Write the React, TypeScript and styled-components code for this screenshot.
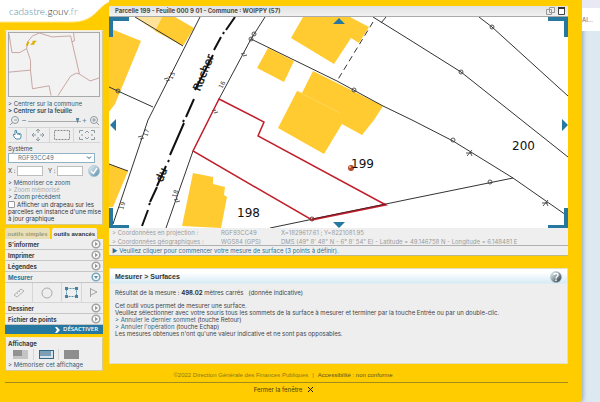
import React from "react";
import styled, { createGlobalStyle, css } from "styled-components";

const yellow = "#ffcc00";
const building = "#ffcb30";
const blue = "#2778a0";
const ink = "#3f4347";

const GlobalStyle = createGlobalStyle`
  *, *::before, *::after { box-sizing: border-box; }
  body {
    margin: 0;
    background: #dde9f1;
    font-family: Inter, "Liberation Sans", Arial, sans-serif;
    font-size: 6px;
    line-height: 7px;
    color: ${ink};
  }
  button, input, select { font: inherit; color: inherit; margin: 0; padding: 0; }
  button { border: 0; background: none; }
  a { color: inherit; text-decoration: none; }
  svg { display: block; }
  h1, h2, p { margin: 0; }
`;

const Screen = styled.div`
  display: flex;
  min-height: 100vh;
`;
const Site = styled.div`
  flex: 1;
  min-width: 0;
  display: flex;
  flex-direction: column;
  background: ${yellow};
  border-radius: 0 0 4px 0;
  box-shadow: 1px 0 4px #8fa3b0;
`;
const Outside = styled.aside`
  width: 18px;
  padding-top: 8px;
  background: linear-gradient(#e9e9f3 8px, transparent 8px);
`;
const OutsideTab = styled.div`
  height: 23px;
  background: #fff;
  color: #666;
  font-size: 6px;
  line-height: 24px;
`;
const Columns = styled.div`
  display: grid;
  grid-template-columns: 109px minmax(0, 1fr);
  padding-right: 14px;
`;
const Sidebar = styled.div`
  display: flex;
  flex-direction: column;
`;
const Brand = styled.header`
  display: grid;
  height: 30px;
  & > * { grid-area: 1 / 1; }
`;
const Logo = styled.a`
  z-index: 1;
  padding: 4px 0 0 9px;
  font: 300 10px/14px Lato, sans-serif;
  color: #4c8aa2;
  b { font-weight: 300; color: #30383d; }
  i { font-style: normal; color: #7fa5b5; }
`;
const Panel = styled.section`
  margin: 0 6px 0 5px;
  padding: 2px 3px;
  background: #eeeeee;
  border: 1px solid #d8c98c;
  border-top-color: #f8efc9;
`;
const MapPanel = styled(Panel)`
  padding: 1px 2px 1px;
  height: 195px;
`;
const MiniMap = styled.div`
  border: 1px solid #a9a9a9;
  background: #f2f2f2;
  margin-bottom: 3px;
`;
const TextLink = styled.a<{ $strong?: boolean; $muted?: boolean }>`
  display: block;
  line-height: 7px;
  font-weight: ${(p) => (p.$strong ? 600 : 400)};
  color: ${(p) => (p.$muted ? "#aaa" : p.$strong ? "#2b4d60" : "#32586d")};
  white-space: nowrap;
`;
const ToolStrip = styled.div<{ $cols: string; $h: number }>`
  display: grid;
  grid-template-columns: ${(p) => p.$cols};
  height: ${(p) => p.$h}px;
  border-bottom: 1px solid #d6d6d6;
`;
const ToolButton = styled.button`
  display: grid;
  place-items: center;
  min-width: 0;
  & + & { border-left: 1px solid #d6d6d6; }
`;
const ZoomRow = styled(ToolStrip)`
  align-items: center;
  margin-top: 1px;
`;
const ZoomSlider = styled.input`
  appearance: none;
  width: 100%;
  min-width: 0;
  height: 8px;
  background: linear-gradient(#aaa, #aaa) 0 4px / 100% 1px no-repeat;
  &::-webkit-slider-thumb {
    appearance: none;
    width: 4px;
    height: 6px;
    background: #5587a0;
    clip-path: polygon(0 0, 100% 0, 50% 100%);
  }
`;
const Sign = styled.span`
  text-align: center;
  color: #5d8aa0;
  font-size: 8px;
`;
const FieldLabel = styled.label`
  display: block;
  padding-top: 1px;
  line-height: 9px;
`;
const SystemSelect = styled.select`
  display: block;
  width: calc(100% - 5px);
  height: 10px;
  padding-left: 9px;
  border: 1px solid #8fb3c4;
  border-radius: 0;
  background: #fff;
  color: #4d7485;
  line-height: 8px;
  appearance: none;
`;
const SelectBox = styled.div`
  display: grid;
  & > * { grid-area: 1 / 1; }
  svg { justify-self: end; align-self: center; margin-right: 8px; pointer-events: none; }
`;
const Coords = styled.form`
  display: flex;
  align-items: center;
  gap: 3px;
  height: 16px;
  label { width: 6px; white-space: nowrap; }
  label + input { flex: 1; }
  input + label { margin-left: 2px; }
  button { width: 12px; height: 12px; margin-left: 2px; }
`;
const CoordInput = styled.input`
  min-width: 0;
  width: 24px;
  height: 10px;
  border: 1px solid #bdbdbd;
  background: #fff;
`;
const ZoomLinks = styled.nav`
  padding-top: 0;
`;
const FlagOption = styled.label`
  display: block;
  line-height: 7px;
  margin-top: 1px;
  white-space: nowrap;
  color: #333;
  input {
    appearance: none;
    width: 7px;
    height: 7px;
    margin-right: 2px;
    border: 1px solid #999;
    border-radius: 1px;
    background: #fff;
    vertical-align: -1px;
  }
`;
const Tabs = styled.div`
  display: flex;
  gap: 2px;
  margin: 3px 6px 0 5px;
`;
const Tab = styled.button<{ $active?: boolean }>`
  width: 45px;
  height: 11px;
  border-radius: 2px 2px 0 0;
  background: ${(p) => (p.$active ? "#eeeeee" : "#e8dfb7")};
  color: ${(p) => (p.$active ? "#333" : "#9c9779")};
  font-family: "Liberation Sans", Arial, sans-serif;
  font-weight: 700;
  white-space: nowrap;
  line-height: 10px;
`;
const Menu = styled.nav`
  margin: 0 6px 0 5px;
  background: #eeeeee;
`;
const MenuRow = styled.button<{ $open?: boolean }>`
  display: flex;
  align-items: center;
  justify-content: space-between;
  width: 100%;
  height: 11px;
  padding: 0 2px 0 3px;
  border-bottom: 1px solid #c5c5c5;
  font-weight: 700;
  color: ${(p) => (p.$open ? blue : "#3c3c3c")};
`;
const Disable = styled.button`
  display: flex;
  align-items: center;
  justify-content: flex-end;
  gap: 3px;
  width: 100%;
  height: 9px;
  padding-right: 5px;
  background: ${blue};
  color: #fff;
  font: 600 6px/9px "Open Sans", sans-serif;
`;
const DisplayPanel = styled(Panel)`
  margin-top: 3px;
  padding: 0 2px;
  height: 34px;
  h2 { font-size: 6px; line-height: 11px; color: #3c3c3c; }
`;
const LayoutChoices = styled.div`
  display: grid;
  grid-template-columns: repeat(3, 25px);
  height: 11px;
  margin-bottom: 1px;
`;
const Main = styled.main`
  display: flex;
  flex-direction: column;
  padding-top: 6px;
`;
const MapFrame = styled.section`
  background: #efefef;
  border-bottom: 1px solid #bdb88e;
`;
const TitleBar = styled.header`
  display: flex;
  align-items: center;
  justify-content: space-between;
  height: 11px;
  padding: 0 2px 0 6px;
  background: linear-gradient(#e2e2e2, #f1f1f1);
  border-bottom: 1px solid #aaa;
  h1 { font-size: 6px; line-height: 10px; color: #4b4b4b; white-space: nowrap; }
  div { display: flex; gap: 2px; }
`;
const MapArea = styled.div`
  background: #fff;
  & > svg { width: 100%; height: auto; }
`;
const CoordTable = styled.table`
  width: 100%;
  height: 18px;
  table-layout: fixed;
  border-collapse: collapse;
  border-bottom: 1px solid #b0b0b0;
  color: #9b9b9b;
  text-align: left;
  white-space: nowrap;
  th { font-weight: 400; padding: 1px 0 0 3px; width: 112px; }
  td { padding: 1px 0 0; }
  td:nth-child(2) { width: 60px; }
  th, td { font-size: 6px; line-height: 7px; }
`;
const Prompt = styled.p`
  height: 9px;
  padding-left: 3px;
  line-height: 9px;
  color: #2f6f96;
  white-space: nowrap;
`;
const Details = styled.section`
  margin-top: 12px;
  min-height: 96px;
  background: #eeeeee;
  border: 1px solid #e4dfc0;
`;
const DetailsHead = styled.header`
  display: flex;
  align-items: center;
  justify-content: space-between;
  height: 15px;
  padding: 0 5px;
  background: linear-gradient(#fff 25%, #d8ecf6 90%, #e8eff2);
  h2 { font: 700 7px/14px "Liberation Sans", Arial, sans-serif; color: #333; }
`;
const DetailsText = styled.div`
  padding: 5px 5px 0;
  white-space: nowrap;
  p { line-height: 7px; }
  p:first-child { margin-bottom: 6px; }
  a { color: #2f6480; }
  b { color: #333; }
`;
const Footer = styled.footer`
  font-family: "Liberation Sans", Arial, sans-serif;
`;
const Legal = styled.div`
  display: flex;
  justify-content: center;
  gap: 4px;
  margin: 0 14px 0 5px;
  padding: 0 7px 2px 0;
  border-bottom: 1px solid #a58a1c;
  color: #8d781d;
  line-height: 9px;
  a { color: #5d5328; }
`;
const Close = styled.button`
  display: flex;
  align-items: center;
  gap: 5px;
  margin: 1px auto 0;
  padding-right: 14px;
  height: 10px;
  font-family: Inter, sans-serif;
  color: #4b3b0c;
`;

const stroke = css`
  fill: none;
  stroke: #333;
  stroke-width: 1;
`;
const Boundary = styled.path`${stroke}`;
const Road = styled.path`${stroke} stroke: #111; stroke-width: 2;`;
const Selected = styled.path`${stroke} stroke: #c01f2b; stroke-width: 1.5;`;
const Parcel = styled.text`
  font: 12px "DejaVu Sans", sans-serif;
  fill: #111;
`;
const HouseNumber = styled.text`
  font: 6px "DejaVu Sans", sans-serif;
  fill: #333;
`;
const StreetName = styled.text`
  font: 11px "DejaVu Sans", sans-serif;
  fill: #111;
  stroke: #111;
  stroke-width: 0.3;
  text-anchor: middle;
`;

const numbers = [
  { n: "15", x: 172, y: 80, a: -64 },
  { n: "16", x: 222, y: 89, a: -62 },
  { n: "17", x: 147, y: 137, a: -70 },
  { n: "18", x: 176, y: 198, a: -72 },
  { n: "19", x: 123, y: 210, a: -72 },
];
const posts = [[118, 91], [251, 39], [254, 34], [354, 90], [461, 72], [492, 27], [453, 140], [490, 182]];
const ticks = [[167, 78], [244, 53], [141, 136], [215, 110], [177, 199]];
const crosses = [[469, 153], [545, 203]];

function CadastralMap() {
  return (
    <svg viewBox="109 17 459 211" role="img" aria-label="Plan cadastral">
      <path fill="#ffe39a" d="M135 17H162L155 31Z" />
      <g fill={building}>
        <path d="M162 17H175L194 28L183 46L155 31Z" />
        <path d="M109 28L141 41L115 104L109 112Z" />
        <path d="M109 164L128 171L113 207H109Z" />
        <path d="M303 17H350L369 27L359 43L351 38L334 64L291 38Z" />
        <path d="M268 48L294 61L284 82L257 68Z" />
        <path d="M313 71L383 106L374 120L362 135L342 124L324 154L278 128L297 91L302 93Z" />
        <path d="M193 173L213 177V184L225 187L224 195L227 197L221 228L182 226Z" />
      </g>
      <path d="M297 91L340 113" stroke="#ffd65c" />
      <Boundary d="M135 17L183 46M200 17L148 120L113 224M109 87L153 107M109 164L128 171" />
      <Boundary d="M265 17L251 39L219 99M193 151L166 228M251 39L337 81L383 106L412 120L453 141L513 178L566 215" />
      <Boundary d="M513 178L410 199L270 228M373 17L410 40L461 72L534 130L568 157M479 17L492 27L568 96M381 23L386 17" />
      <Boundary d="M373 22L337 81" strokeDasharray="6 4" />
      <Road d="M235 17L226 30M224 32L223 34M221 37L214 50M213 55L195 90M194 99L186 117M184 120L183 122M184 123L170 155M169 160L168 162M166 166L157 186M157 187L150 202M150 203L149 205M148 210L142 226" />
      {posts.map(([x, y]) => (
        <circle key={`${x}-${y}`} cx={x} cy={y} r="2" fill="none" stroke="#444" strokeWidth=".9" />
      ))}
      {ticks.map(([x, y]) => (
        <path key={`${x}-${y}`} d={`M${x - 3} ${y + 1}l4-1m-2 3l4-1`} stroke="#444" strokeWidth=".9" fill="none" />
      ))}
      {crosses.map(([x, y]) => (
        <path key={`${x}-${y}`} d={`M${x - 3} ${y}l6 0m0-3l-5 6m3-4l2 4`} stroke="#444" strokeWidth=".9" fill="none" />
      ))}
      {numbers.map((h) => (
        <HouseNumber key={h.n} transform={`translate(${h.x} ${h.y}) rotate(${h.a})`}>{h.n}</HouseNumber>
      ))}
      <StreetName transform="translate(207 74) rotate(-68)">Rucher</StreetName>
      <StreetName transform="translate(165 176) rotate(-70)">du</StreetName>
      <Selected d="M219 99L264 122L258 136L386 205L312 220L193 151Z" />
      <path d="M312 219L386 204" stroke="#6d1820" />
      <circle cx="312" cy="219" r="2" fill="none" stroke="#7d3030" />
      <circle cx="351" cy="168" r="3" fill="#b64a2b" />
      <circle cx="350" cy="167" r="1" fill="#f4b795" />
      <Parcel x="351" y="168">199</Parcel>
      <Parcel x="512" y="150">200</Parcel>
      <Parcel x="237" y="217">198</Parcel>
      <g fill={blue}>
        <path d="M109 17H129V21H113V37H109ZM568 17H548V21H564V37H568ZM109 228H129V225H113V208H109ZM568 228H548V225H564V208H568Z" />
        <path d="M333 24L339 18L345 24ZM333 222L339 228L345 222ZM110 125L116 119V131ZM568 125L562 119V131Z" />
      </g>
    </svg>
  );
}

const Bullet = ({ open }: { open?: boolean }) => (
  <svg width="10" height="10" viewBox="0 0 10 10" aria-hidden="true">
    <circle cx="5" cy="5" r="3.8" fill="#fff" stroke={open ? "#7ba8be" : "#a3a3a3"} strokeWidth="1.6" />
    <path d={open ? "M2.8 4H7.2L5 7Z" : "M4 2.8L7 5L4 7.2Z"} fill={open ? "#5e96b2" : "#999"} />
  </svg>
);

const Glyph = ({ d, w = 14, h = 12, c = "#8e9ba2" }: { d: string; w?: number; h?: number; c?: string }) => (
  <svg width={w} height={h} viewBox={`0 0 ${w} ${h}`} fill="none" stroke={c} aria-hidden="true">
    <path d={d} />
  </svg>
);

const Ball = ({ mark, id, deep }: { mark: string; id: string; deep: string }) => (
  <svg width="12" height="12" viewBox="0 0 12 12" aria-hidden="true">
    <defs>
      <linearGradient id={id} x1="0" y1="0" x2="1" y2="1">
        <stop offset=".1" stopColor="#e3eef4" />
        <stop offset=".9" stopColor={deep} />
      </linearGradient>
    </defs>
    <circle cx="6" cy="6" r="5.5" fill={`url(#${id})`} stroke="#9ab2bf" strokeWidth=".5" />
    <path d={mark} fill="none" stroke="#fff" strokeWidth="1.4" />
  </svg>
);

export default function App() {
  return (
    <>
      <GlobalStyle />
      <Screen>
        <Site>
          <Columns>
            <Sidebar>
              <Brand>
                <svg width="109" height="30" viewBox="0 0 109 30" aria-hidden="true">
                  <path d="M0 0H109V2C97 7 95 22 72 22H0Z" fill="#fff" />
                  <path d="M0 22H72C95 22 97 7 109 2" fill="none" stroke="#ffe88f" />
                </svg>
                <Logo href="#">cadastre.<b>gouv</b><i>.fr</i></Logo>
              </Brand>

              <MapPanel>
                <MiniMap>
                  <svg width="100%" viewBox="0 0 92 64" role="img" aria-label="Plan de situation">
                    <path
                      d="M0 1L3 20H11L18 16L19 9L24 3L31 0L44 4L63 3L72 42L83 49L92 46M18 16L22 28V38L24 57L41 54L43 64M50 64L63 44L69 41L72 42M0 40L22 38M66 0L67 8L64 9"
                      fill="none" stroke="#c39d98" strokeWidth=".9"
                    />
                    <path d="M18 13L20 9M24 9H26L24 11H26" stroke="#ddb000" strokeWidth="2" fill="none" />
                  </svg>
                </MiniMap>
                <TextLink href="#">&gt; Centrer sur la commune</TextLink>
                <TextLink href="#" $strong>&gt; Centrer sur la feuille</TextLink>
                <ZoomRow $cols="12px 8px minmax(0, 1fr) 7px 12px" $h={13}>
                  <ToolButton aria-label="Zoom arrière">
                    <Glyph w={11} h={11} d="M4 7L1 10M5 5h3M9.5 5a3.5 3.5 0 1 1-7 0a3.5 3.5 0 1 1 7 0Z" />
                  </ToolButton>
                  <Sign>–</Sign>
                  <ZoomSlider type="range" aria-label="Niveau de zoom" defaultValue={97} />
                  <Sign>+</Sign>
                  <ToolButton aria-label="Zoom avant">
                    <Glyph w={11} h={11} d="M7 7L10 10M3 5h4M5 3v4M8.5 5a3.5 3.5 0 1 1-7 0a3.5 3.5 0 1 1 7 0Z" />
                  </ToolButton>
                </ZoomRow>
                <ToolStrip $cols="18px 23px 24px minmax(0, 1fr)" $h={15}>
                  <ToolButton aria-label="Déplacer">
                    <svg width="10" height="11" viewBox="0 0 10 11" fill="#fff" stroke="#4f8fae" aria-hidden="true">
                      <path d="M3 9L1 6L2 5L3 6V1.5H4.5V4L9 5V8L8 10H4Z" />
                      <path d="M6 4.5V6M7.5 5V6" />
                    </svg>
                  </ToolButton>
                  <ToolButton aria-label="Recentrer">
                    <Glyph w={12} h={12} d="M6 0V4M6 8v4M0 6h4M8 6h4M4 2l2-2 2 2M4 10l2 2 2-2M2 4L0 6l2 2M10 4l2 2-2 2" />
                  </ToolButton>
                  <ToolButton aria-label="Zoom par rectangle">
                    <svg width="16" height="10" aria-hidden="true">
                      <rect x=".5" y=".5" width="15" height="9" fill="none" stroke="#888" strokeDasharray="2 1" />
                    </svg>
                  </ToolButton>
                  <ToolButton aria-label="Vue entière">
                    <Glyph w={16} h={10} d="M.5 3V.5H4M12 .5h3.5V3M15.5 7v2.5H12M4 9.5H.5V7M6 3l2-2 2 2M6 7l2 2 2-2M3 4v2M13 4v2" />
                  </ToolButton>
                </ToolStrip>
                <FieldLabel htmlFor="system">Système</FieldLabel>
                <SelectBox>
                  <SystemSelect id="system" defaultValue="RGF93CC49">
                    <option>RGF93CC49</option>
                  </SystemSelect>
                  <Glyph w={6} h={4} d="M1 .5L3 2.5L5 .5" c="#245f80" />
                </SelectBox>
                <Coords>
                  <label htmlFor="cx">X :</label>
                  <CoordInput id="cx" />
                  <label htmlFor="cy">Y :</label>
                  <CoordInput id="cy" />
                  <button type="button" aria-label="Valider">
                    <Ball id="ball-ok" deep="#5f93b0" mark="M3 6L5.5 8.5L9 3" />
                  </button>
                </Coords>
                <ZoomLinks>
                  <TextLink href="#">&gt; Mémoriser ce zoom</TextLink>
                  <TextLink href="#" $muted>&gt; Zoom mémorisé</TextLink>
                  <TextLink href="#">&gt; Zoom précédent</TextLink>
                </ZoomLinks>
                <FlagOption>
                  <input type="checkbox" />Afficher un drapeau sur les<br />
                  parcelles en instance d'une mise<br />à jour graphique
                </FlagOption>
              </MapPanel>

              <Tabs>
                <Tab>outils simples</Tab>
                <Tab $active>outils avancés</Tab>
              </Tabs>
              <Menu>
                <MenuRow>S'informer<Bullet /></MenuRow>
                <MenuRow>Imprimer<Bullet /></MenuRow>
                <MenuRow>Légendes<Bullet /></MenuRow>
                <MenuRow $open>Mesurer<Bullet open /></MenuRow>
                <ToolStrip $cols="27px 29px 20px minmax(0, 1fr)" $h={20}>
                  <ToolButton aria-label="Mesurer une distance">
                    <Glyph d="M2 8L9 2L12 4L5 10ZM5 6l1 1M7 4l1 1" c="#b2b2b2" />
                  </ToolButton>
                  <ToolButton aria-label="Mesurer un cercle">
                    <svg width="12" height="12" aria-hidden="true">
                      <circle cx="6" cy="6" r="5" fill="none" stroke="#aaa" />
                    </svg>
                  </ToolButton>
                  <ToolButton aria-label="Mesurer une surface">
                    <svg width="13" height="11" aria-hidden="true">
                      <rect x="1.5" y="1.5" width="10" height="8" fill="none" stroke="#5090b1" strokeDasharray="2 1" />
                      <path d="M0 0h3v3H0ZM10 0h3v3h-3ZM0 8h3v3H0ZM10 8h3v3h-3Z" fill="#4a7f9a" />
                    </svg>
                  </ToolButton>
                  <ToolButton aria-label="Mesurer un angle">
                    <Glyph w={10} h={11} d="M2.5 1V10M3 2L9 5L3 8" c="#a3a3a3" />
                  </ToolButton>
                </ToolStrip>
                <MenuRow>Dessiner<Bullet /></MenuRow>
                <MenuRow>Fichier de points<Bullet /></MenuRow>
                <Disable>
                  <svg width="5" height="6" aria-hidden="true"><path d="M0 0H2L5 3L2 6H0L2 3Z" fill="#fff" /></svg>
                  DÉSACTIVER
                </Disable>
              </Menu>

              <DisplayPanel>
                <h2>Affichage</h2>
                <LayoutChoices>
                  <ToolButton aria-label="Petite carte">
                    <svg width="15" height="9" aria-hidden="true">
                      <path d="M0 0H15V9H0Z" fill="#c4c4c4" /><path d="M0 0H9V6H0Z" fill="#929292" />
                    </svg>
                  </ToolButton>
                  <ToolButton aria-label="Carte moyenne">
                    <svg width="15" height="9" aria-hidden="true">
                      <path d="M0 0H15V9H0Z" fill="#32698a" /><path d="M1 1H14V8H1Z" fill="#d5e2e9" /><path d="M1 1H12V6H1Z" fill="#7ba0b5" />
                    </svg>
                  </ToolButton>
                  <ToolButton aria-label="Grande carte">
                    <svg width="15" height="9" aria-hidden="true"><path d="M0 0H15V9H0Z" fill="#8e8e8e" /></svg>
                  </ToolButton>
                </LayoutChoices>
                <TextLink href="#">&gt; Mémoriser cet affichage</TextLink>
              </DisplayPanel>
            </Sidebar>

            <Main>
              <MapFrame>
                <TitleBar>
                  <h1>Parcelle 199 - Feuille 000 9 01 - Commune : WOIPPY (57)</h1>
                  <div>
                    <button aria-label="Réduire">
                      <svg width="9" height="8" fill="#eee" stroke="#999" aria-hidden="true">
                        <path d="M3.5 .5h5v5h-5ZM.5 2.5h5v5h-5Z" />
                      </svg>
                    </button>
                    <button aria-label="Agrandir">
                      <svg width="9" height="8" aria-hidden="true">
                        <path d="M1.5 .5h6v7h-6Z" fill="#fff" stroke="#444" /><path d="M1 0h7v2H1Z" fill="#333" />
                      </svg>
                    </button>
                  </div>
                </TitleBar>
                <MapArea><CadastralMap /></MapArea>
                <CoordTable>
                  <tbody>
                    <tr>
                      <th scope="row">&gt; Coordonnées en projection :</th>
                      <td>RGF93CC49</td>
                      <td>X=1829617.61 ; Y=8221081.95</td>
                    </tr>
                    <tr>
                      <th scope="row">&gt; Coordonnées géographiques :</th>
                      <td>WGS84 (GPS)</td>
                      <td>DMS (49° 8' 48" N - 6° 8' 54" E) - Latitude = 49.146758 N - Longitude = 6.148481 E</td>
                    </tr>
                  </tbody>
                </CoordTable>
                <Prompt>► Veuillez cliquer pour commencer votre mesure de surface (3 points à définir).</Prompt>
              </MapFrame>

              <Details>
                <DetailsHead>
                  <h2>Mesurer &gt; Surfaces</h2>
                  <button aria-label="Aide">
                    <Ball id="ball-help" deep="#33424b" mark="M4 4C4 2 8 2 8 4C8 6 6 5 6 7.5M6 8.5V10" />
                  </button>
                </DetailsHead>
                <DetailsText>
                  <p>Résultat de la mesure : <b>498.02</b> mètres carrés &nbsp; (donnée indicative)</p>
                  <p>Cet outil vous permet de mesurer une surface.</p>
                  <p>Veuillez sélectionner avec votre souris tous les sommets de la surface à mesurer et terminer par la touche Entrée ou par un double-clic.</p>
                  <p><a href="#">&gt; Annuler le dernier sommet</a> (touche Retour)</p>
                  <p><a href="#">&gt; Annuler l'opération</a> (touche Echap)</p>
                  <p>Les mesures obtenues n'ont qu'une valeur indicative et ne sont pas opposables.</p>
                </DetailsText>
              </Details>
            </Main>
          </Columns>
          <Footer>
            <Legal>
              <span>©2022 Direction Générale des Finances Publiques</span>
              <span>|</span>
              <a href="#">Accessibilité : non conforme</a>
            </Legal>
            <Close>
              Fermer la fenêtre
              <Glyph w={7} h={7} d="M1 1L6 6M6 1L1 6" c="#221a00" />
            </Close>
          </Footer>
        </Site>
        <Outside><OutsideTab>AI...</OutsideTab></Outside>
      </Screen>
    </>
  );
}
